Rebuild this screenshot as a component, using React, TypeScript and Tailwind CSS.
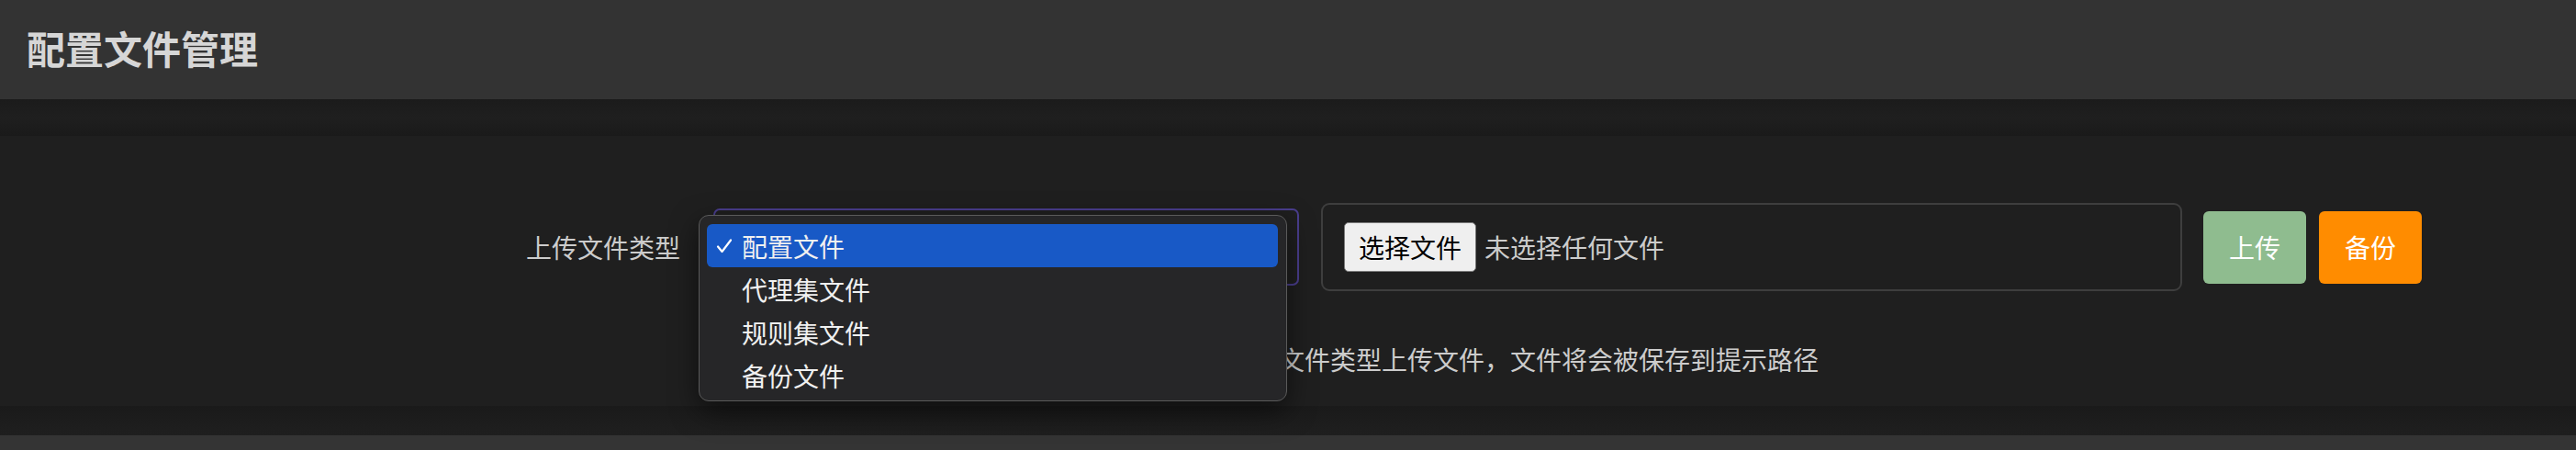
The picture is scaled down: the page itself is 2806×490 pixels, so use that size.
import React from "react";

const options = ["配置文件", "代理集文件", "规则集文件", "备份文件"];

function CheckMark() {
  return (
    <svg width="20" height="20" viewBox="0 0 20 20" className="shrink-0">
      <path d="M3 10.5 L7.5 16 L17 3.5" fill="none" stroke="#ffffff" strokeWidth="2.2" strokeLinecap="round" strokeLinejoin="round" />
    </svg>
  );
}

export default function App() {
  const selected = 0;

  return (
    <div className="min-h-screen bg-[#1e1e1e] font-['Noto_Sans_CJK_SC',sans-serif]">
      <header className="h-[108px] bg-[#333333] px-[29px] flex items-center">
        <h1 className="text-[42px] leading-none font-bold text-[#d6d6d6] pb-[4px]">配置文件管理</h1>
      </header>

      <div className="h-[40px] bg-gradient-to-b from-[#1b1b1b] via-[#1f1f1f] to-[#1a1a1a]" />

      <section className="h-[294px] bg-[#1f1f1f] pt-[73px]">
        <div className="flex items-center">
          <div className="w-[741px] flex justify-end">
            <span className="text-[28px] leading-none text-[#cccccc]">上传文件类型</span>
          </div>

          <div className="relative ml-[36px] w-[638px] h-[84px] rounded-[7px] border-2 border-[#4a3e8e] bg-[#1f1f1f]">
            {/* open native select popup */}
            <div className="absolute left-[-18px] top-[5px] w-[641px] h-[203px] z-10 rounded-[11px] border border-[#5a5a5a] bg-[#262628] shadow-[0_10px_30px_rgba(0,0,0,0.55)] pt-[9px] pl-[8px] pr-[9px] pb-[5px]">
              {options.map((o, i) => (
                <div
                  key={o}
                  className={`h-[47px] flex items-center rounded-[6px] pl-[9px] ${i === selected ? "bg-[#1859c6]" : ""}`}
                >
                  <div className="w-[29px]">{i === selected && <CheckMark />}</div>
                  <span className="text-[28px] leading-none text-[#f0f0f0]">{o}</span>
                </div>
              ))}
            </div>
          </div>

          <div className="ml-[24px] w-[938px] h-[96px] rounded-[9px] border-2 border-[#3e3e3e] flex items-center pl-[23px]">
            <button className="h-[54px] w-[144px] rounded-[5px] border border-[#7a7a7a] bg-[#efefef] text-[28px] leading-none text-black">
              选择文件
            </button>
            <span className="ml-[9px] text-[28px] leading-none text-[#cccccc]">未选择任何文件</span>
          </div>

          <button className="ml-[23px] w-[112px] h-[79px] rounded-[6px] bg-[#8fbc8f] text-[28px] leading-none text-white">
            上传
          </button>
          <button className="ml-[14px] w-[112px] h-[79px] rounded-[6px] bg-[#ff8c00] text-[28px] leading-none text-white">
            备份
          </button>
        </div>

        <p className="mt-[60px] pl-[777px] text-[28px] leading-none text-[#cccccc] whitespace-nowrap">
          提示：请先在上方选择正确的类型，然后按照所选文件类型上传文件，文件将会被保存到提示路径
        </p>
      </section>

      <div className="h-[32px] bg-gradient-to-b from-[#1a1a1a] to-[#1f1f1f]" />
      <div className="h-[108px] bg-[#343434]" />
    </div>
  );
}
